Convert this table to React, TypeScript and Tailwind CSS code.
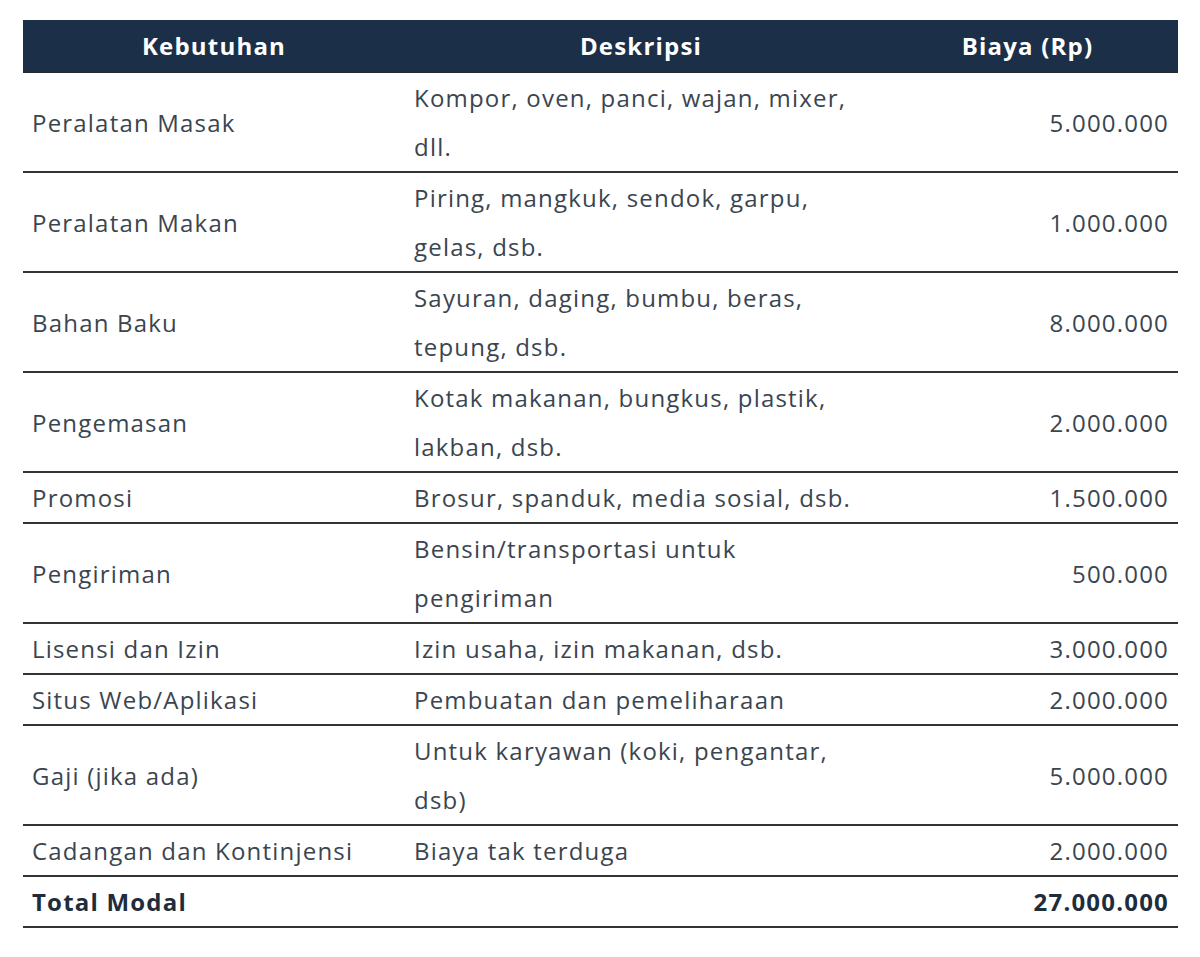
import React from "react";

const rows = [
  { item: "Peralatan Masak", desc: "Kompor, oven, panci, wajan, mixer, dll.", cost: "5.000.000" },
  { item: "Peralatan Makan", desc: "Piring, mangkuk, sendok, garpu, gelas, dsb.", cost: "1.000.000" },
  { item: "Bahan Baku", desc: "Sayuran, daging, bumbu, beras, tepung, dsb.", cost: "8.000.000" },
  { item: "Pengemasan", desc: "Kotak makanan, bungkus, plastik, lakban, dsb.", cost: "2.000.000" },
  { item: "Promosi", desc: "Brosur, spanduk, media sosial, dsb.", cost: "1.500.000" },
  { item: "Pengiriman", desc: "Bensin/transportasi untuk pengiriman", cost: "500.000" },
  { item: "Lisensi dan Izin", desc: "Izin usaha, izin makanan, dsb.", cost: "3.000.000" },
  { item: "Situs Web/Aplikasi", desc: "Pembuatan dan pemeliharaan", cost: "2.000.000" },
  { item: "Gaji (jika ada)", desc: "Untuk karyawan (koki, pengantar, dsb)", cost: "5.000.000" },
  { item: "Cadangan dan Kontinjensi", desc: "Biaya tak terduga", cost: "2.000.000" },
];

export default function App() {
  return (
    <div className="min-h-screen bg-white pt-5 pl-[23px] font-['Open_Sans',sans-serif]">
      <table className="w-[1155px] table-fixed border-collapse text-[24px] tracking-[1.2px] text-[#3a4550]">
        <colgroup>
          <col className="w-[382px]" />
          <col className="w-[472px]" />
          <col className="w-[301px]" />
        </colgroup>
        <thead>
          <tr className="h-[52px] bg-[#1b3048] text-white border-b-2 border-[#2a2a2a]">
            <th className="font-bold text-center">Kebutuhan</th>
            <th className="font-bold text-center">Deskripsi</th>
            <th className="font-bold text-center">Biaya (Rp)</th>
          </tr>
        </thead>
        <tbody>
          {rows.map((r) => (
            <tr key={r.item} className="border-b-2 border-[#333]">
              <td className="px-[9px] py-0 align-middle leading-[49px]">{r.item}</td>
              <td className="pl-[9px] pr-[12px] py-0 align-middle leading-[49px]">{r.desc}</td>
              <td className="px-[9px] py-0 align-middle text-right leading-[49px]">{r.cost}</td>
            </tr>
          ))}
          <tr className="border-b-2 border-[#333] font-bold text-[#1e2d3c]">
            <td className="px-[9px] leading-[49px]">Total Modal</td>
            <td />
            <td className="px-[9px] text-right leading-[49px]">27.000.000</td>
          </tr>
        </tbody>
      </table>
    </div>
  );
}
